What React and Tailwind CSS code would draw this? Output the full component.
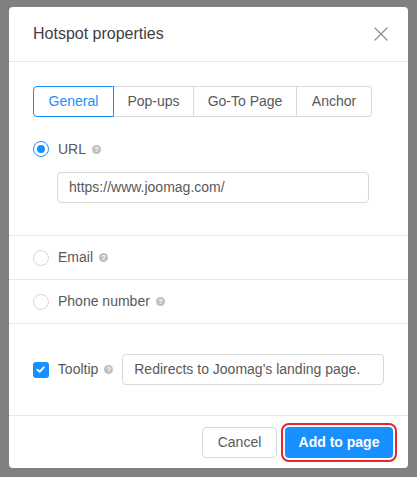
import { X } from "lucide-react";

function Help() {
  return (
    <span className="ml-[6px] inline-flex h-[9px] w-[9px] items-center justify-center rounded-full bg-[#bfbfbf] text-[7px] font-bold leading-none text-white">
      ?
    </span>
  );
}

function Radio({ checked }) {
  return checked ? (
    <span className="flex h-[16px] w-[16px] items-center justify-center rounded-full border border-[#1890ff] bg-white">
      <span className="h-[8px] w-[8px] rounded-full bg-[#1890ff]" />
    </span>
  ) : (
    <span className="h-[16px] w-[16px] rounded-full border border-[#d9d9d9] bg-white" />
  );
}

const tabs = ["General", "Pop-ups", "Go-To Page", "Anchor"];
const tabWidths = ["w-[81px]", "w-[80px]", "w-[103px]", "w-[75px]"];

export default function App() {
  return (
    <div
      className="h-[477px] w-[417px] bg-[#808080] px-[9px] pt-[7px]"
      style={{ fontFamily: '"Liberation Sans", Arial, sans-serif' }}
    >
      <div className="flex h-[461px] flex-col rounded-[4px] bg-white">
        {/* header */}
        <div className="flex h-[55px] items-center justify-between border-b border-[#e8e8e8] pl-[24px] pr-[15px]">
          <span className="text-[16px] text-[#404040]">Hotspot properties</span>
          <X className="h-[24px] w-[24px] text-[#8c8c8c]" strokeWidth={1.2} />
        </div>

        {/* general section */}
        <div className="border-b border-[#e8e8e8] px-[24px] pb-[32px] pt-[24px]">
          <div className="flex">
            {tabs.map((t, i) => (
              <div
                key={t}
                className={
                  "flex h-[31px] items-center justify-center text-[14px] " +
                  tabWidths[i] +
                  (i === 0
                    ? " rounded-l-[4px] border border-[#1890ff] text-[#1890ff]"
                    : " border-y border-r border-[#d9d9d9] text-[#595959]") +
                  (i === 3 ? " rounded-r-[4px]" : "")
                }
              >
                {t}
              </div>
            ))}
          </div>
          <div className="mt-[24px] flex h-[16px] items-center">
            <Radio checked />
            <span className="ml-[9px] text-[14px] leading-none text-[#595959]">URL</span>
            <Help />
          </div>
          <div className="ml-[24px] mt-[15px] flex h-[31px] w-[312px] items-center rounded-[4px] border border-[#d9d9d9] px-[11px] text-[14px] text-[#595959]">
            https://www.joomag.com/
          </div>
        </div>

        {/* email */}
        <div className="flex h-[44px] items-center border-b border-[#e8e8e8] px-[24px]">
          <Radio />
          <span className="ml-[9px] text-[14px] text-[#595959]">Email</span>
          <Help />
        </div>

        {/* phone */}
        <div className="flex h-[44px] items-center border-b border-[#e8e8e8] px-[24px]">
          <Radio />
          <span className="ml-[9px] text-[14px] text-[#595959]">Phone number</span>
          <Help />
        </div>

        {/* tooltip */}
        <div className="flex h-[92px] items-center border-b border-[#e8e8e8] px-[24px]">
          <span className="flex h-[16px] w-[16px] items-center justify-center rounded-[3px] bg-[#1890ff]">
            <svg viewBox="0 0 12 12" className="h-[11px] w-[11px]" fill="none" stroke="white" strokeWidth="2" strokeLinecap="round" strokeLinejoin="round">
              <path d="M2.5 6.2 5 8.6 9.6 3.6" />
            </svg>
          </span>
          <span className="ml-[9px] text-[14px] text-[#595959]">Tooltip</span>
          <Help />
          <div className="ml-[9px] flex h-[31px] w-[264px] items-center rounded-[4px] border border-[#d9d9d9] px-[11px] text-[14px] text-[#595959]">
            Redirects to Joomag's landing page.
          </div>
        </div>

        {/* footer */}
        <div className="flex flex-1 items-center justify-end gap-[8px] pr-[15px]">
          <button className="h-[31px] w-[75px] rounded-[4px] border border-[#d9d9d9] bg-white text-[14px] text-[#595959]">
            Cancel
          </button>
          <button className="h-[31px] w-[108px] rounded-[4px] bg-[#1890ff] text-[14px] font-bold text-white outline-2 outline-offset-2 outline-[#e3262f]">
            Add to page
          </button>
        </div>
      </div>
    </div>
  );
}
